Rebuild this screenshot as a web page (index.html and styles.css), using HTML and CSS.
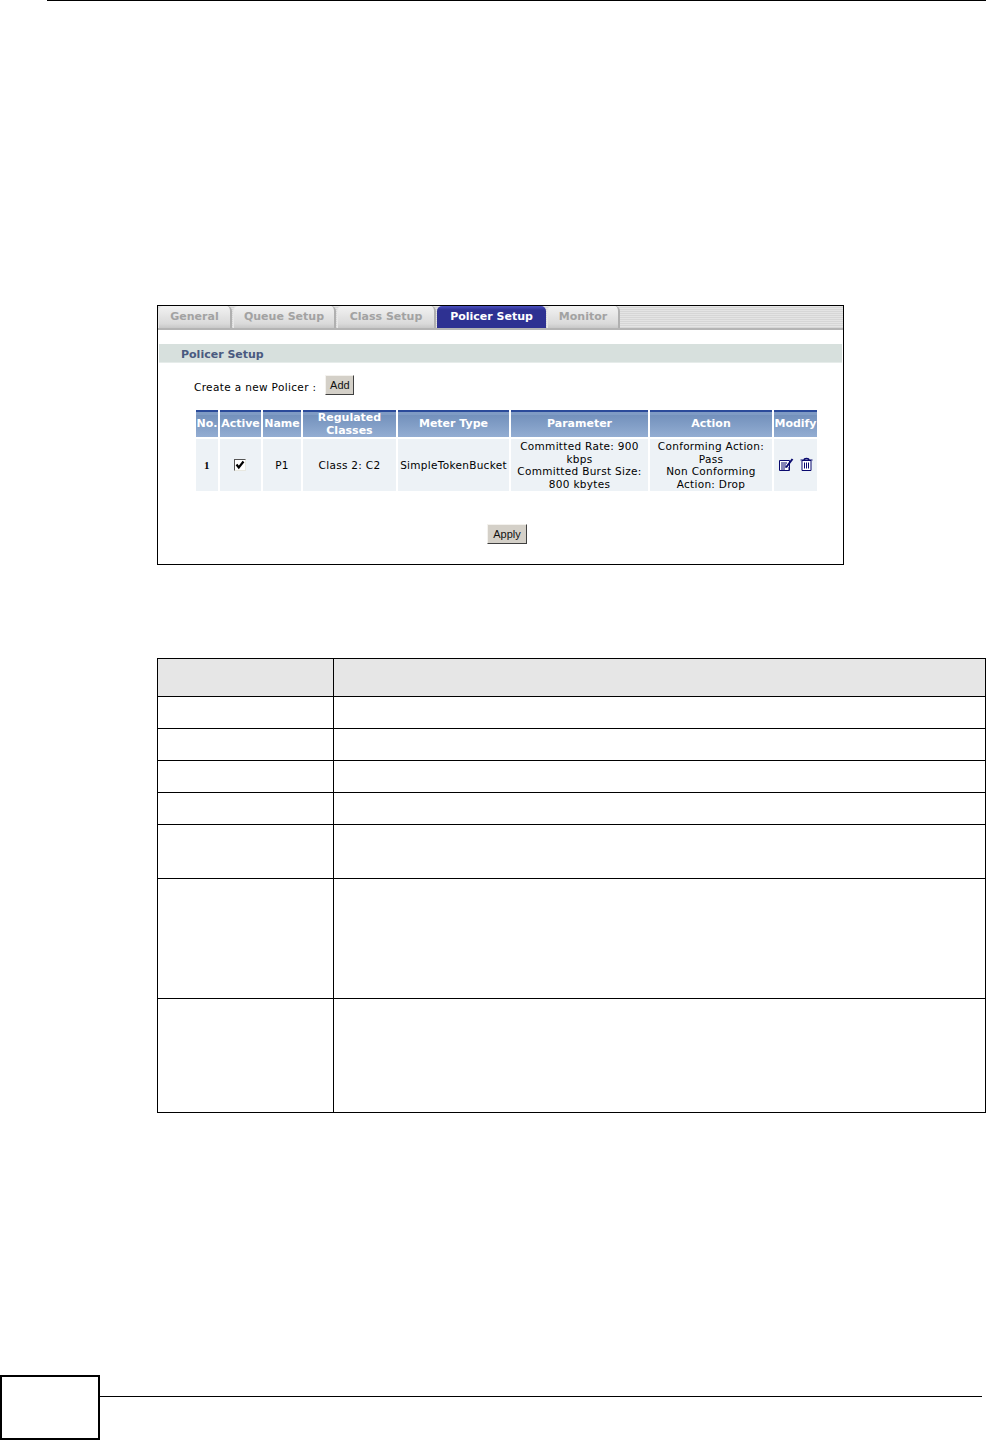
FILE: index.html
```html
<!DOCTYPE html>
<html lang="en">
<head>
<meta charset="utf-8">
<title>Policer Setup</title>
<link rel="stylesheet" href="styles.css">
</head>
<body>
<div class="page">
  <div class="top-rule"></div>

  <section class="shot">
    <nav class="tabs">
      <span class="tab t1">General</span>
      <span class="tab t2">Queue Setup</span>
      <span class="tab t3">Class Setup</span>
      <span class="tab t4 active">Policer Setup</span>
      <span class="tab t5">Monitor</span>
    </nav>
    <h2 class="band">Policer Setup</h2>
    <div class="create">
      <span>Create a new Policer :</span>
      <span class="btn add">Add</span>
    </div>
    <div class="grid">
      <div class="th">No.</div>
      <div class="th">Active</div>
      <div class="th">Name</div>
      <div class="th two">Regulated<br>Classes</div>
      <div class="th">Meter Type</div>
      <div class="th">Parameter</div>
      <div class="th">Action</div>
      <div class="th">Modify</div>
      <div class="td num">1</div>
      <div class="td"><span class="check"><svg width="10" height="10" viewBox="0 0 10 10"><path d="M1.5 4.5 L3.8 7.5 L8.5 1.5" fill="none" stroke="#000" stroke-width="2.2"/></svg></span></div>
      <div class="td">P1</div>
      <div class="td">Class 2: C2</div>
      <div class="td">SimpleTokenBucket</div>
      <div class="td">Committed Rate: 900<br>kbps<br>Committed Burst Size:<br>800 kbytes</div>
      <div class="td">Conforming Action:<br>Pass<br>Non Conforming<br>Action: Drop</div>
      <div class="td icons">
        <svg width="15" height="15" viewBox="0 0 15 15"><path d="M.5 3.5H10.5V13.5H.5Z" fill="#fff" stroke="#0a0a6e"/><path d="M2 6H8M2 8H7M2 10H7M2 12H6" stroke="#0a0a6e"/><path d="M7 10.5L13.5 2" stroke="#0a0a6e" stroke-width="2"/><path d="M10 10V13" stroke="#0a0a6e"/></svg>
        <svg width="13" height="14" viewBox="0 0 13 14"><path d="M.5 3H12.5M4 3C4 .8 9 .8 9 3" fill="none" stroke="#0a0a6e" stroke-width="1.2"/><path d="M2 3.5H11V13.5H2Z" fill="#fff" stroke="#0a0a6e"/><path d="M4.5 5.5V11.5M6.5 5.5V11.5M8.5 5.5V11.5" stroke="#0a0a6e"/></svg>
      </div>
    </div>
    <div class="apply-row"><span class="btn apply">Apply</span></div>
  </section>

  <table class="desc">
    <colgroup><col class="c1"><col></colgroup>
    <tr class="head"><td></td><td></td></tr>
    <tr class="r1"><td></td><td></td></tr>
    <tr class="r1"><td></td><td></td></tr>
    <tr class="r1"><td></td><td></td></tr>
    <tr class="r1"><td></td><td></td></tr>
    <tr class="r2"><td></td><td></td></tr>
    <tr class="r3"><td></td><td></td></tr>
    <tr class="r4"><td></td><td></td></tr>
  </table>

  <footer class="foot">
    <div class="pageno"></div>
    <div class="foot-rule"></div>
  </footer>
</div>
</body>
</html>
```
FILE: styles.css
```css
html, body { margin: 0; padding: 0; background: #fff; }
.page { width: 986px; height: 1440px; display: flex; flex-direction: column; font-family: "DejaVu Sans", Verdana, sans-serif; color: #000; overflow: hidden; }
.top-rule { margin-left: 47px; height: 1px; background: #000; }

.shot { margin: 304px 0 0 157px; width: 685px; height: 258px; border: 1px solid #000; display: flex; flex-direction: column; }
.tabs { height: 22px; display: flex; background: repeating-linear-gradient(#e4e4e4 0 1px, #d6d6d6 1px 2px); border-bottom: 2px solid #b4b4b4; }
.tab { box-sizing: border-box; height: 22px; padding-bottom: 2px; margin-right: 1px; display: flex; align-items: center; justify-content: center; font-size: 11px; font-weight: 700; letter-spacing: 0; color: #a2a2a2; background: linear-gradient(#f2f2f2, #dadada 80%, #c8c8c8); border-right: 2px solid #b0b0b0; border-left: 1px solid #e8e8e8; border-radius: 5px 5px 0 0; }
.t1 { width: 74px; }
.t2 { width: 103px; }
.t3 { width: 99px; }
.t4 { width: 109px; }
.t5 { width: 73px; }
.tab.active { background: linear-gradient(#4a4fc0, #2e3192 4px); color: #fff; border: 0; }

.band { margin: 14px 1px 0; height: 18px; background: #d7e0dd; border-bottom: 1px solid #e6ecea; padding-left: 22px; font-size: 11px; line-height: 21px; font-weight: 700; letter-spacing: 0; color: #4a5a80; }

.create { margin: 12px 0 0 36px; height: 20px; display: flex; align-items: center; gap: 9px; font-size: 10.5px; letter-spacing: .35px; }
.create span:first-child { padding-top: 4px; }

.btn { box-sizing: border-box; display: flex; align-items: center; justify-content: center; background: #d4d0c8; font-family: "Liberation Sans", Arial, sans-serif; font-size: 11px; letter-spacing: 0; color: #111; border: 1px solid; border-color: #f4f2ee #404040 #404040 #f4f2ee; }
.add { width: 29px; height: 20px; }
.apply { width: 40px; height: 20px; }

.grid { margin: 15px 0 0 38px; display: grid; grid-template-columns: 22px 41px 38px 93px 111px 137px 122px 43px; column-gap: 2px; row-gap: 2px; grid-template-rows: 27px 52px; }
.th { box-sizing: border-box; display: flex; align-items: center; justify-content: center; text-align: center; color: #fff; font-weight: 700; font-size: 11px; line-height: 12px; letter-spacing: 0; white-space: nowrap; background: linear-gradient(#2a4a9a 0 2px, #7f9bc4 2px 5px, #7391bc 5px, #93add2); }
.th.two { line-height: 13px; }
.td { display: flex; align-items: center; justify-content: center; text-align: center; background: #edf2f6; font-size: 10.5px; line-height: 12.5px; white-space: nowrap; letter-spacing: .3px; }
.num { font-family: "Liberation Serif", serif; font-weight: 700; font-size: 11px; }
.check { box-sizing: border-box; width: 12px; height: 12px; margin-right: 2px; border: 1px solid; border-color: #555 #e8e8e0 #e8e8e0 #555; background: #fff; display: flex; align-items: center; justify-content: center; }
.icons { gap: 6px; padding-bottom: 2px; }

.apply-row { margin-top: 33px; display: flex; justify-content: center; padding-left: 13px; }

.desc { margin: 93px 0 0 157px; width: 829px; border-collapse: collapse; table-layout: fixed; }
.desc td { border: 1px solid #000; padding: 0; box-sizing: border-box; }
.desc .c1 { width: 176px; }
.head td { background: #e6e6e6; height: 38px; }
.r1 td { height: 32px; }
.r2 td { height: 54px; }
.r3 td { height: 120px; }
.r4 td { height: 114px; }

.foot { margin-top: auto; height: 65px; display: flex; align-items: flex-start; }
.pageno { box-sizing: border-box; width: 100px; height: 65px; border: 2px solid #000; flex: none; }
.foot-rule { margin-top: 21px; width: 882px; height: 1px; background: #000; }
```
